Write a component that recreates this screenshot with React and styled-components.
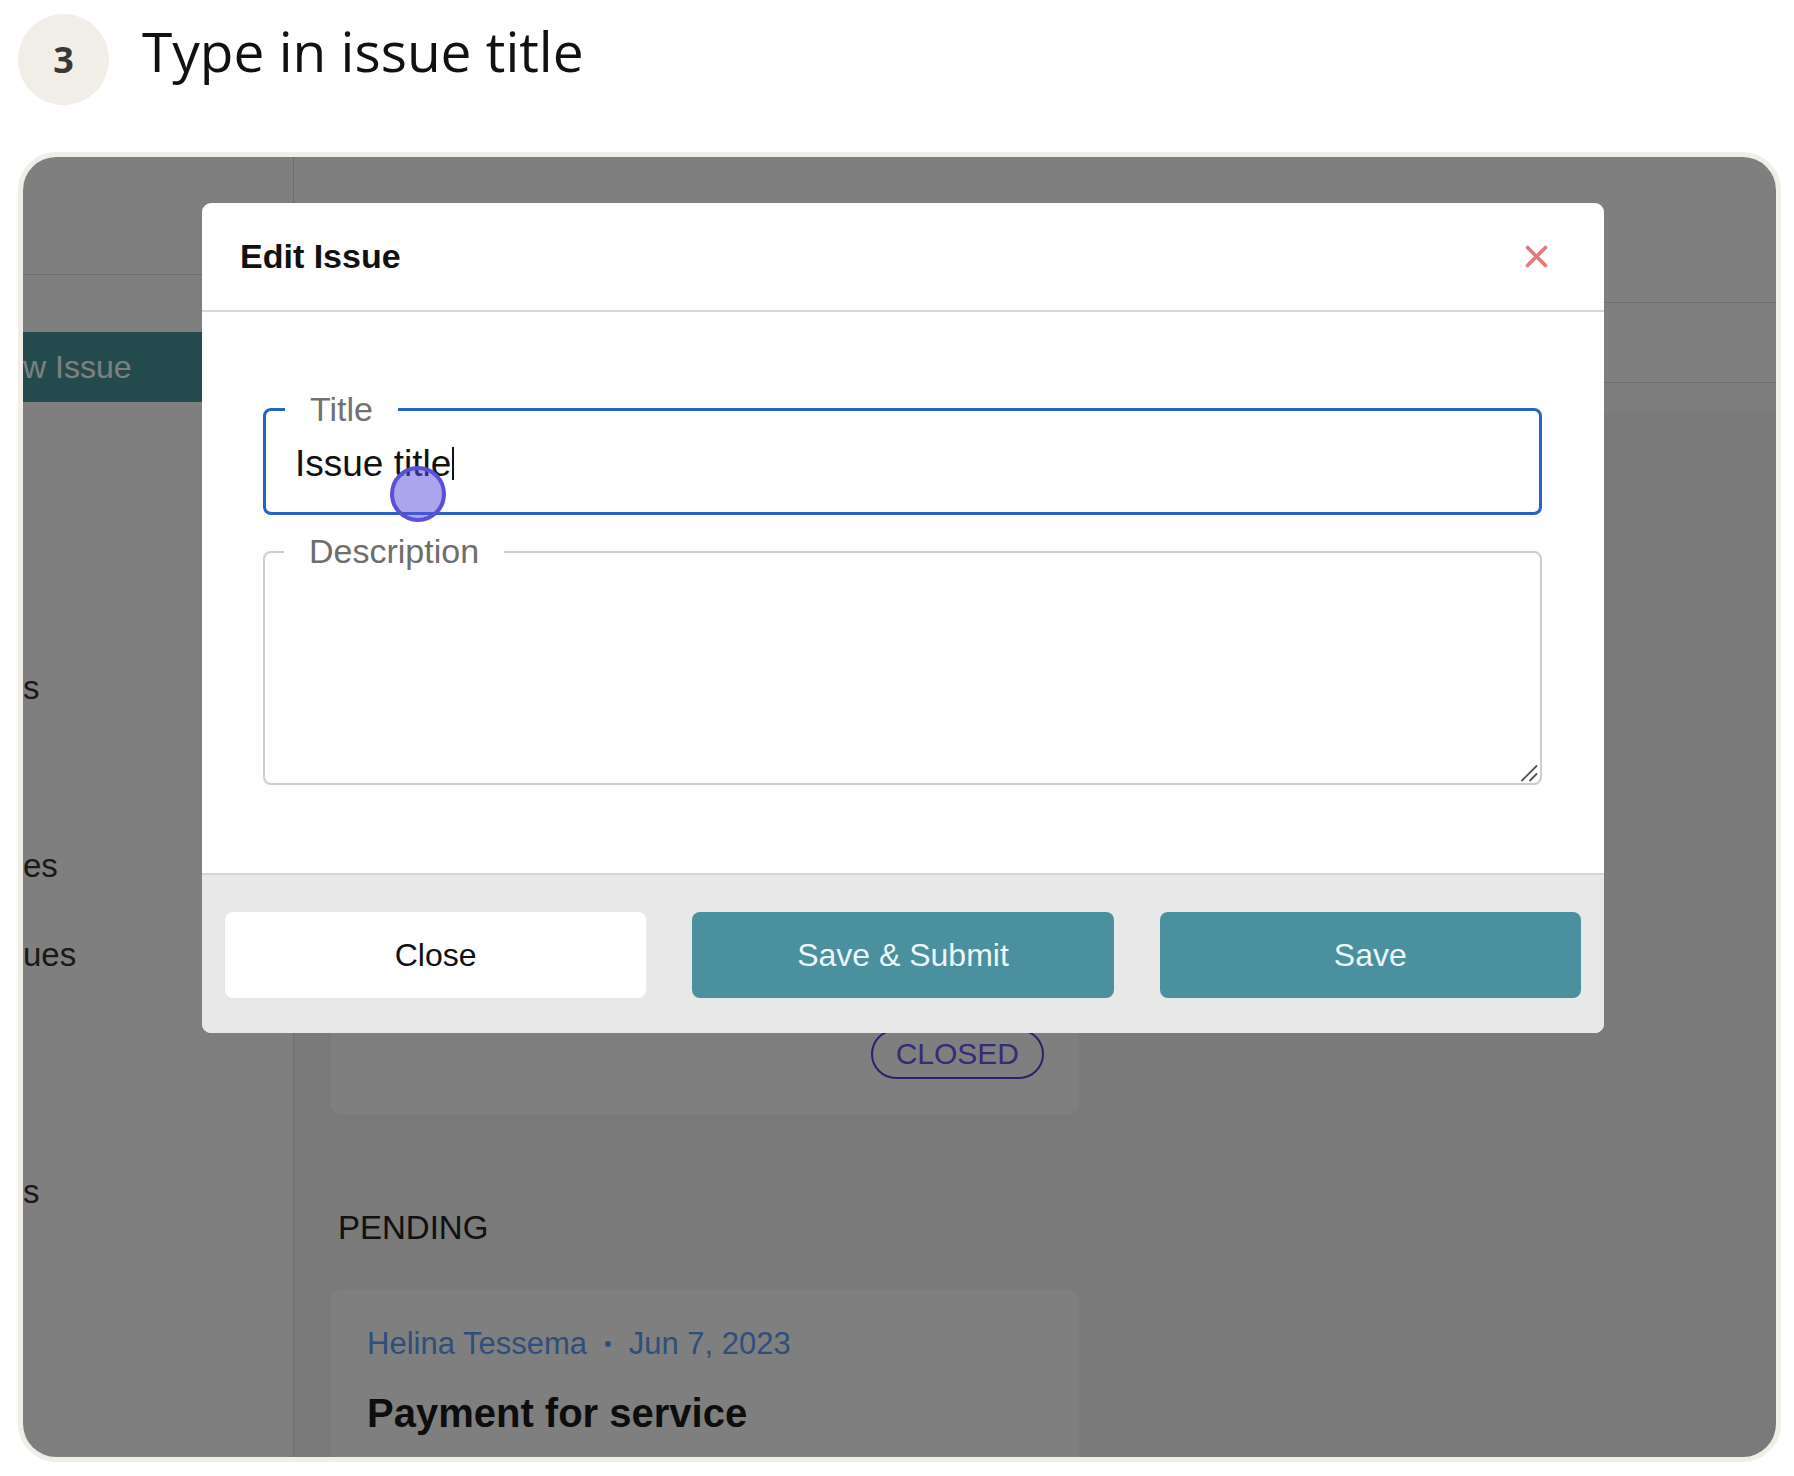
import React from "react";
import styled, { createGlobalStyle } from "styled-components";

const Global = createGlobalStyle`
  html, body { margin: 0; padding: 0; background: #ffffff; }
  * { box-sizing: border-box; }
  #root { width: 1794px; }
`;

const Page = styled.div`
  width: 1794px;
  height: 1476px;
  overflow: hidden;
  background: #ffffff;
`;

const StepHeader = styled.header`
  display: flex;
  align-items: flex-start;
  gap: 33px;
  padding: 14px 0 0 18px;
`;

const StepBadge = styled.div`
  width: 91px;
  height: 91px;
  border-radius: 50%;
  background: #f1eee7;
  display: flex;
  align-items: center;
  justify-content: center;
  font-family: "Open Sans", "Noto Sans", sans-serif;
  font-weight: 700;
  font-size: 36px;
  color: #383838;
`;

const StepTitle = styled.h1`
  margin: 1px 0 0;
  font-family: "Open Sans", "Noto Sans", sans-serif;
  font-weight: 400;
  font-size: 55px;
  line-height: 72px;
  color: #111111;
`;

const Frame = styled.div`
  position: relative;
  margin: 47px 0 0 18px;
  width: 1763px;
  height: 1310px;
  border: 5px solid #f1eee7;
  border-radius: 38px;
  overflow: hidden;
  display: flex;
  font-family: "Liberation Sans", Arial, sans-serif;
`;

const Sidebar = styled.aside`
  width: 271px;
  flex: none;
  background: #ffffff;
  border-right: 1px solid #dcdcdc;
  display: flex;
  flex-direction: column;
`;

const SideHeader = styled.div`
  height: 118px;
  border-bottom: 1px solid #dcdcdc;
`;

const NewIssueButton = styled.div`
  margin: 57px 20px 0 0;
  height: 70px;
  background: #46969a;
  color: #ffffff;
  font-size: 32px;
  line-height: 70px;
  border-radius: 0 6px 6px 0;
  white-space: nowrap;
`;

const NavList = styled.nav`
  margin-top: 269px;
  display: flex;
  flex-direction: column;
`;

const NavItem = styled.div`
  margin-top: ${(p) => p.$gap || 0}px;
  height: 33px;
  font-size: 33px;
  line-height: 33px;
  color: #333333;
  white-space: nowrap;
`;

const Main = styled.main`
  flex: 1;
  display: flex;
  flex-direction: column;
  background: #f4f4f4;
`;

const TopBar = styled.div`
  height: 146px;
  flex: none;
  background: #ffffff;
  border-bottom: 1px solid #dcdcdc;
`;

const TabsBar = styled.div`
  height: 80px;
  flex: none;
  background: #ffffff;
  border-bottom: 1px solid #dcdcdc;
`;

const Strip = styled.div`
  height: 29px;
  flex: none;
  background: #fafafa;
`;

const Content = styled.div`
  padding: 300px 0 0 37px;
  display: flex;
  flex-direction: column;
`;

const Card = styled.div`
  width: 748px;
  background: #ffffff;
  border-radius: 12px;
  flex: none;
`;

const ClosedCard = styled(Card)`
  height: 403px;
  display: flex;
  align-items: flex-end;
  justify-content: flex-end;
  padding: 0 35px 36px 0;
`;

const StatusPill = styled.span`
  height: 50px;
  padding: 0 23px 0 23px;
  border: 2px solid #5c3ed6;
  border-radius: 25px;
  color: #6e56ee;
  font-size: 30px;
  line-height: 46px;
`;

const SectionLabel = styled.h2`
  margin: 96px 0 0 7px;
  font-weight: 400;
  font-size: 33px;
  line-height: 33px;
  color: #222222;
`;

const IssueCard = styled(Card)`
  margin-top: 46px;
  height: 300px;
  padding: 38px 36px 0;
`;

const Meta = styled.div`
  display: flex;
  align-items: center;
  gap: 17px;
  font-size: 31px;
  line-height: 31px;
  color: #5a9efc;
`;

const Dot = styled.span`
  font-size: 22px;
`;

const IssueTitle = styled.div`
  margin-top: 34px;
  font-size: 40px;
  line-height: 40px;
  font-weight: 700;
  color: #1a1a1a;
`;

const Backdrop = styled.div`
  position: absolute;
  inset: 0;
  background: rgba(0, 0, 0, 0.5);
  padding: 46px 0 0 179px;
`;

const Modal = styled.section`
  width: 1402px;
  background: #ffffff;
  border-radius: 9px;
  overflow: hidden;
`;

const ModalHeader = styled.div`
  height: 109px;
  display: flex;
  align-items: center;
  justify-content: space-between;
  padding: 0 56px 0 38px;
  border-bottom: 2px solid #d8d8d8;
`;

const ModalTitle = styled.h3`
  margin: 0;
  font-size: 34px;
  font-weight: 700;
  color: #111111;
`;

const CloseIcon = styled.svg`
  width: 23px;
  height: 23px;
  display: block;
`;

const ModalBody = styled.div`
  padding: 81px 62px 88px 61px;
  display: flex;
  flex-direction: column;
  gap: 20px;
`;

const Field = styled.fieldset`
  position: relative;
  margin: 0;
  padding: 0 0 ${(p) => (p.$focused ? 20 : 0)}px;
  border: ${(p) => (p.$focused ? "3px solid #2862c7" : "2px solid #cdcdcd")};
  border-radius: 8px;
  min-width: 0;
`;

const Legend = styled.legend`
  margin-left: 19px;
  padding: 0 25px;
  font-size: 34px;
  line-height: 33px;
  color: ${(p) => (p.$focused ? "#727272" : "#6e6e6e")};
`;

const InputRow = styled.div`
  position: relative;
  height: 66px;
  padding: 9px 0 0 29px;
  display: flex;
  align-items: center;
  font-size: 37px;
  color: #111111;
`;

const Caret = styled.span`
  display: inline-block;
  width: 2px;
  height: 33px;
  margin-left: 1px;
  background: #111111;
`;

const TouchMark = styled.span`
  position: absolute;
  left: 124px;
  top: 40px;
  width: 56px;
  height: 56px;
  border-radius: 50%;
  background: rgba(86, 76, 218, 0.5);
  border: 4px solid #5a4fd8;
`;

const TextArea = styled.textarea`
  display: block;
  width: 100%;
  height: 215px;
  margin: 0;
  padding: 10px 31px;
  border: none;
  outline: none;
  resize: none;
  background: transparent;
  font-family: "Liberation Sans", Arial, sans-serif;
  font-size: 32px;
`;

const ResizeGrip = styled.svg`
  position: absolute;
  right: 2px;
  bottom: 1px;
  width: 18px;
  height: 18px;
  display: block;
`;

const ModalFooter = styled.div`
  background: #e8e8e8;
  border-top: 2px solid #d4d4d4;
  padding: 37px 23px 35px;
  display: grid;
  grid-template-columns: repeat(3, 1fr);
  gap: 46px;
`;

const FooterButton = styled.button`
  height: 86px;
  border: none;
  border-radius: 8px;
  font-family: "Liberation Sans", Arial, sans-serif;
  font-size: 32px;
  background: ${(p) => (p.$primary ? "#4a909e" : "#ffffff")};
  color: ${(p) => (p.$primary ? "#eef6f7" : "#111111")};
  cursor: pointer;
`;

export default function App() {
  return (
    <Page>
      <Global />
      <StepHeader>
        <StepBadge>3</StepBadge>
        <StepTitle>Type in issue title</StepTitle>
      </StepHeader>

      <Frame>
        <Sidebar>
          <SideHeader />
          <NewIssueButton>w Issue</NewIssueButton>
          <NavList>
            <NavItem>s</NavItem>
            <NavItem $gap={145}>es</NavItem>
            <NavItem $gap={56}>ues</NavItem>
            <NavItem $gap={204}>s</NavItem>
          </NavList>
        </Sidebar>

        <Main>
          <TopBar />
          <TabsBar />
          <Strip />
          <Content>
            <ClosedCard>
              <StatusPill>CLOSED</StatusPill>
            </ClosedCard>
            <SectionLabel>PENDING</SectionLabel>
            <IssueCard>
              <Meta>
                <span>Helina Tessema</span>
                <Dot>•</Dot>
                <span>Jun 7, 2023</span>
              </Meta>
              <IssueTitle>Payment for service</IssueTitle>
            </IssueCard>
          </Content>
        </Main>

        <Backdrop>
          <Modal>
            <ModalHeader>
              <ModalTitle>Edit Issue</ModalTitle>
              <CloseIcon viewBox="0 0 23 23">
                <path
                  d="M2.5 2.5 L20.5 20.5 M20.5 2.5 L2.5 20.5"
                  stroke="#df7b7b"
                  strokeWidth="3.6"
                  strokeLinecap="round"
                  fill="none"
                />
              </CloseIcon>
            </ModalHeader>

            <ModalBody>
              <Field $focused>
                <Legend $focused>Title</Legend>
                <InputRow>
                  Issue title
                  <Caret />
                  <TouchMark />
                </InputRow>
              </Field>
              <Field>
                <Legend>Description</Legend>
                <TextArea defaultValue="" />
                <ResizeGrip viewBox="0 0 18 18">
                  <path
                    d="M2 16.5 L16.5 2 M10 16.5 L16.5 10"
                    stroke="#555555"
                    strokeWidth="1.8"
                    strokeLinecap="round"
                    fill="none"
                  />
                </ResizeGrip>
              </Field>
            </ModalBody>

            <ModalFooter>
              <FooterButton>Close</FooterButton>
              <FooterButton $primary>Save &amp; Submit</FooterButton>
              <FooterButton $primary>Save</FooterButton>
            </ModalFooter>
          </Modal>
        </Backdrop>
      </Frame>
    </Page>
  );
}
